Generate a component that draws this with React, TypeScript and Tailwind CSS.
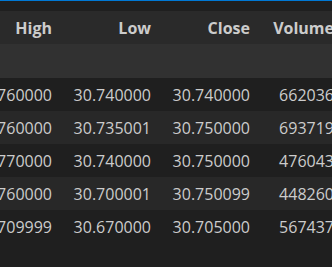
import React from "react";

const rows = [
  ["30.760000", "30.740000", "30.740000", "662036"],
  ["30.760000", "30.735001", "30.750000", "693719"],
  ["30.770000", "30.740000", "30.750000", "476043"],
  ["30.760000", "30.700001", "30.750099", "448260"],
  ["30.709999", "30.670000", "30.705000", "567437"],
];

export default function App() {
  return (
    <div className="w-[332px] h-[267px] overflow-hidden bg-[#1f1f1f] text-[#cccccc] font-['Open_Sans',sans-serif] text-[16px]">
      <div className="h-px bg-[#0078d4]" />
      <div className="h-[10px] bg-[#1f1f1f]" />
      <div className="ml-[-37px] w-max">
        <div className="flex h-[33px] items-center bg-[#2a2a2a] font-bold">
          <div className="w-[99px] shrink-0 pr-[10px] text-right">High</div>
          <div className="w-[99px] shrink-0 pr-[10px] text-right">Low</div>
          <div className="w-[99px] shrink-0 pr-[10px] text-right">Close</div>
          <div className="w-[74px] shrink-0 text-right">Volume</div>
        </div>
        <div className="h-[34px] bg-[#313131]" />
        {rows.map((r, i) => (
          <div
            key={i}
            className={`flex h-[33px] items-center ${i % 2 === 1 ? "bg-[#282828]" : "bg-[#1f1f1f]"}`}
          >
            <div className="w-[99px] shrink-0 pr-[10px] text-right">{r[0]}</div>
            <div className="w-[99px] shrink-0 pr-[10px] text-right">{r[1]}</div>
            <div className="w-[99px] shrink-0 pr-[10px] text-right">{r[2]}</div>
            <div className="w-[74px] shrink-0 text-right">{r[3]}</div>
          </div>
        ))}
      </div>
    </div>
  );
}
